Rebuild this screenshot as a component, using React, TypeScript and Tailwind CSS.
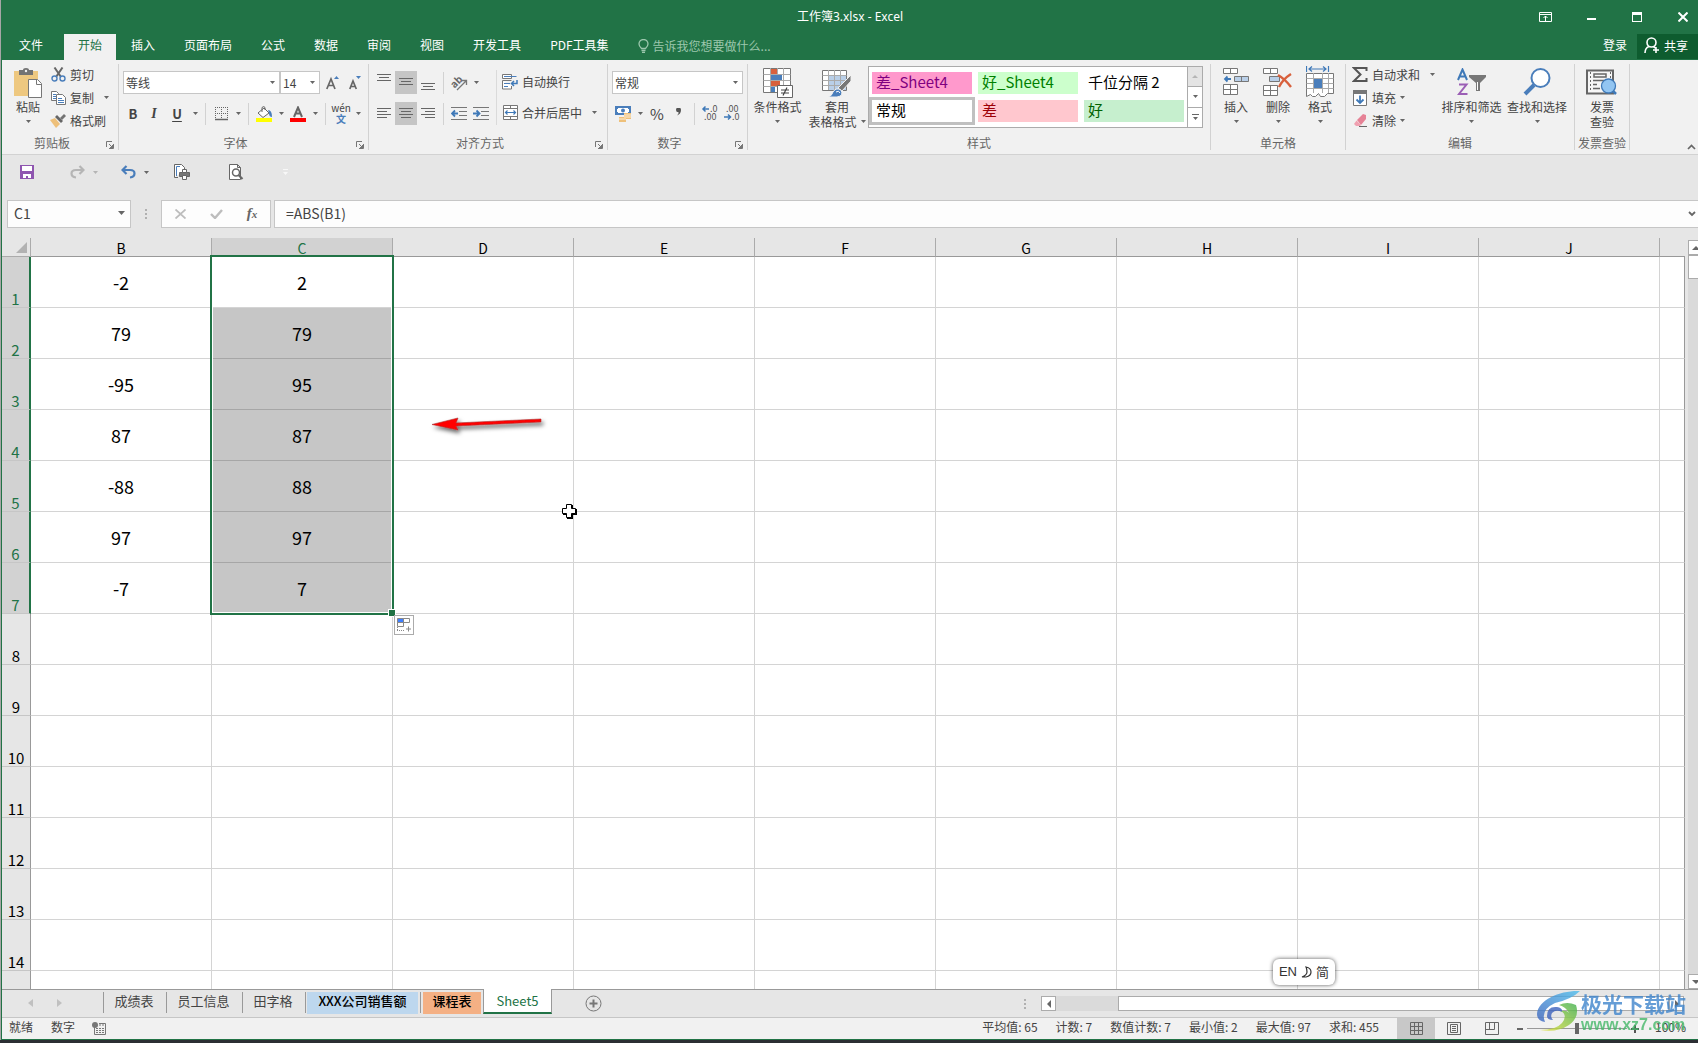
import type { ReactNode } from 'react';

const tabs = ['插入', '页面布局', '公式', '数据', '审阅', '视图', '开发工具', 'PDF工具集'];

const columns = ['B', 'C', 'D', 'E', 'F', 'G', 'H', 'I', 'J'];

const values = [
  ['-2', '2'],
  ['79', '79'],
  ['-95', '95'],
  ['87', '87'],
  ['-88', '88'],
  ['97', '97'],
  ['-7', '7'],
];

const rows = Array.from({ length: 15 }, (_, i) => i + 1);

const cellStyles = [
  { name: '差_Sheet4', look: 'bg-[#ff99cc] text-[#800080]' },
  { name: '好_Sheet4', look: 'bg-[#ccffcc] text-[#008000]' },
  { name: '千位分隔 2', look: 'bg-white text-black' },
  { name: '常规', look: 'bg-white text-black ring-3 ring-[#c0c0c0]' },
  { name: '差', look: 'bg-[#ffc7ce] text-[#9c0006]' },
  { name: '好', look: 'bg-[#c6efce] text-[#006100]' },
];

const stats = ['平均值: 65', '计数: 7', '数值计数: 7', '最小值: 2', '最大值: 97', '求和: 455'];

function Caret() {
  return (
    <svg width="5" height="3" viewBox="0 0 5 3">
      <path d="M0 0h5L2.500 3z" fill="#666" />
    </svg>
  );
}

function CaretButton({ label }: { label: string }) {
  return (
    <button aria-label={label} className="flex h-[23px] w-3 items-center justify-center">
      <Caret />
    </button>
  );
}

function Tool({ label, active, children }: { label: string; active?: boolean; children: ReactNode }) {
  return (
    <button
      aria-label={label}
      className={`flex h-[23px] w-[22px] shrink-0 items-center justify-center ${active ? 'bg-[#c5c5c5]' : ''}`}
    >
      {children}
    </button>
  );
}

function Sep() {
  return <span className="mx-1 h-[22px] w-px bg-[#d2d2d2]" />;
}

function Group({ label, width, launcher, children }: { label: string; width: string; launcher?: boolean; children: ReactNode }) {
  return (
    <section className={`flex shrink-0 flex-col border-r border-[#d2d2d2] ${width}`}>
      <div className="flex h-[72px]">{children}</div>
      <div className="flex h-[14px] items-center">
        <h2 className="flex-1 text-center leading-[14px] whitespace-nowrap text-[#666]">{label}</h2>
        {launcher && (
          <button aria-label={`${label}设置`} className="mt-1 mr-1 ml-1">
            <svg width="8" height="8" viewBox="0 0 8 8" fill="none" stroke="#777">
              <path d="M.5 6V.5H6M3 3l3.500 3.500M7.500 3v4.500H3" />
              <path d="M7 4v3H4z" fill="#777" />
            </svg>
          </button>
        )}
      </div>
    </section>
  );
}

function BigButton({ icon, lines, width, caret }: { icon: ReactNode; lines: string[]; width: string; caret?: 'below' | 'inline' }) {
  return (
    <button className={`flex shrink-0 flex-col items-center pt-1 leading-[15px] whitespace-nowrap ${width}`}>
      <span className="mb-px flex h-[30px] items-start">{icon}</span>
      {lines.map((l, i) => (
        <span key={l} className="flex items-center gap-1">
          {l}
          {caret === 'inline' && i === lines.length - 1 && <Caret />}
        </span>
      ))}
      {caret === 'below' && (
        <span className="flex h-[15px] items-center">
          <Caret />
        </span>
      )}
    </button>
  );
}

function SmallButton({ icon, label, caret }: { icon: ReactNode; label: string; caret?: 'near' | 'far' }) {
  return (
    <button className="flex h-[23px] items-center gap-1 pb-0.5 whitespace-nowrap">
      <span className="flex w-4 justify-center">{icon}</span>
      {label}
      {caret && (
        <span className={caret === 'far' ? 'ml-1.5' : ''}>
          <Caret />
        </span>
      )}
    </button>
  );
}

function Combo({ label, value, width }: { label: string; value: string; width: string }) {
  return (
    <div className={`relative h-[23px] ${width}`}>
      <select aria-label={label} className="h-full w-full appearance-none border border-[#c6c6c6] bg-white pl-0.5 text-[#444]">
        <option>{value}</option>
      </select>
      <span className="pointer-events-none absolute inset-y-0 right-[5px] flex items-center">
        <Caret />
      </span>
    </div>
  );
}

/* icons */

function Lines({ widths, top, align }: { widths: number[]; top: number; align: 'l' | 'c' | 'r' }) {
  return (
    <svg width="14" height="17" viewBox="0 0 14 17" fill="#666">
      {widths.map((w, i) => (
        <rect key={i} x={align === 'l' ? 0 : align === 'c' ? (14 - w) / 2 : 14 - w} y={top + i * 3} width={w} height="1" />
      ))}
    </svg>
  );
}

function PasteIcon() {
  return (
    <svg width="28" height="30" viewBox="0 0 28 30">
      <path d="M0 3h24v25H0z" fill="#eec880" />
      <path d="M5 2h4q0-2 3-2t3 2h4v5H5z" fill="#737373" />
      <circle cx="12" cy="3" r="1.200" fill="#f1f1f1" />
      <path d="M14.500 11.500h9l4 4v14h-13z" fill="#fff" stroke="#777" />
      <path d="M22.500 11.500v5h5" fill="none" stroke="#777" />
    </svg>
  );
}

function CutIcon() {
  return (
    <svg width="15" height="15" viewBox="0 0 15 15" fill="none">
      <path d="M3.500.500L10 10M11.500.500L5 10" stroke="#666" strokeWidth="2" />
      <circle cx="3.500" cy="11.500" r="2.500" stroke="#4a7ebb" strokeWidth="1.400" />
      <circle cx="11.500" cy="11.500" r="2.500" stroke="#4a7ebb" strokeWidth="1.400" />
    </svg>
  );
}

function CopyIcon() {
  return (
    <svg width="15" height="14" viewBox="0 0 15 14" fill="#fff" stroke="#777">
      <path d="M.5.500h5l2 2v7h-7z" />
      <path d="M2 3.500h3M2 5.500h3M2 7.500h3" stroke="#4a7ebb" />
      <path d="M5.500 3.500h6l3 3v7h-9z" />
      <path d="M7 7.500h4M7 9.500h6M7 11.500h6" stroke="#4a7ebb" />
    </svg>
  );
}

function BrushIcon() {
  return (
    <svg width="16" height="14" viewBox="0 0 16 14">
      <path d="M0 6l5-2 5 6-4 4z" fill="#eec07a" />
      <path d="M5 3l2-2 6 6-2 2z" fill="#666" />
      <path d="M10 4l4-4 2 2-4 4z" fill="#737373" />
    </svg>
  );
}

function FontSizeIcon({ up }: { up?: boolean }) {
  return (
    <svg width="14" height="15" viewBox="0 0 14 15">
      <path d={up ? 'M.8 14L5 4l4 10M2.300 10.500h5.500' : 'M1.800 14L5 6l3.300 8M3 11.500h4'} fill="none" stroke="#666" strokeWidth="1.700" />
      <path d={up ? 'M8 4h5l-2.500-3z' : 'M8 1h5l-2.500 3z'} fill="#4a7ebb" />
    </svg>
  );
}

function BorderIcon() {
  return (
    <svg width="13" height="14" viewBox="0 0 13 14" fill="none" stroke="#666">
      <path d="M0 .5h13M0 6.500h13M.5 0v12M6.500 0v12M12.500 0v12" strokeDasharray="1 1" />
      <path d="M0 12.500h13" strokeWidth="1.500" />
    </svg>
  );
}

function BucketIcon() {
  return (
    <svg width="16" height="16" viewBox="0 0 16 16">
      <path d="M2 7l6-5 5 5-6 4.500z" fill="#fff" stroke="#666" />
      <path d="M6 6V1.500q2-2 3 0V4" fill="none" stroke="#666" />
      <path d="M12 4q4 0 4 7-3 0-3-4z" fill="#4a7ebb" />
      <path d="M0 12h16v4H0z" fill="#ff0" />
    </svg>
  );
}

function FontColorIcon() {
  return (
    <svg width="16" height="16" viewBox="0 0 16 16">
      <path d="M4 11L8 1.500 12 11M5.500 7.500h5" fill="none" stroke="#666" strokeWidth="2" />
      <path d="M0 12h16v4H0z" fill="red" />
    </svg>
  );
}

function OrientationIcon() {
  return (
    <svg width="17" height="16" viewBox="0 0 17 16" className="overflow-visible">
      <text x="0" y="11" fontSize="10" fontWeight="700" fill="#666" transform="rotate(-45 5 8)">ab</text>
      <path d="M6 15l9-9M11 5.500h4.500V10" fill="none" stroke="#777" strokeWidth="1.300" />
    </svg>
  );
}

function IndentIcon({ right }: { right?: boolean }) {
  return (
    <svg width="16" height="14" viewBox="0 0 16 14" fill="none" stroke="#777">
      <path d="M0 .5h16M8 4.500h8M8 8.500h8M0 12.500h16" />
      <path d={right ? 'M0 6.500h6M3.500 3.500l3 3-3 3' : 'M1 6.500h6M4 3.500l-3 3 3 3'} stroke="#3f79b8" strokeWidth="1.800" />
    </svg>
  );
}

function WrapIcon() {
  return (
    <svg width="16" height="16" viewBox="0 0 16 16" fill="none" stroke="#777">
      <path d="M.5.500h9v4h-9zM.5 8V6.500h9M.5 7v8h9v-3" fill="#fff" />
      <path d="M2 2.500h12.500M2 9.500h6M2 12.500h4" stroke="#4a7ebb" />
      <path d="M15 6v3.500h-5M12 7l-2.500 2.500L12 12" stroke="#3f79b8" strokeWidth="1.500" />
    </svg>
  );
}

function MergeIcon() {
  return (
    <svg width="15" height="15" viewBox="0 0 15 15" fill="none" stroke="#777">
      <path d="M.5.500h14v14H.5z" fill="#fff" />
      <path d="M.5 3.500h14M.5 11.500h14M7.500 0v3.500M7.500 11.500V15" />
      <path d="M2.500 7.500h10M4.500 5.500l-2 2 2 2M10.500 5.500l2 2-2 2" stroke="#3f79b8" strokeWidth="1.200" />
    </svg>
  );
}

function MoneyIcon() {
  return (
    <svg width="17" height="16" viewBox="0 0 17 16">
      <path d="M0 0h16v9H0z" fill="#4a7ebb" />
      <path d="M3 2h10v1h1v3h-1v1H3V6H2V3h1z" fill="#fff" />
      <circle cx="8" cy="4.500" r="2" fill="#4a7ebb" />
      <path d="M9 7h7v6H9zM4 11h7v5H4z" fill="#eec07a" />
      <path d="M9 9h7M9 11h7M4 13h7" stroke="#fff" strokeWidth=".7" />
    </svg>
  );
}

function DecimalIcon({ less }: { less?: boolean }) {
  return (
    <svg width="16" height="15" viewBox="0 0 16 15" fontSize="9" fill="#555" className="overflow-visible">
      <text x={less ? 2 : 8} y="6">{less ? '.00' : '.0'}</text>
      <text x={less ? 8 : 2} y="14">{less ? '.0' : '.00'}</text>
      <path
        d={less ? 'M0 11h6M4 8.500L6.500 11 4 13.500' : 'M1 3h6M3.500.500L1 3l2.500 2.500'}
        fill="none"
        stroke="#3f79b8"
        strokeWidth="1.500"
      />
    </svg>
  );
}

function CondFormatIcon() {
  return (
    <svg width="30" height="30" viewBox="0 0 30 30">
      <path d="M.5.500h27v24H.5z" fill="#fff" stroke="#777" />
      <path d="M.5 6.500h27M.5 12.500h27M.5 18.500h27M7.500 0v24M14.500 0v24M20.500 0v24" stroke="#aaa" fill="none" />
      <path d="M8 1h6v5H8zM8 13h9v5H8z" fill="#d8603c" />
      <path d="M8 7h11v5H8zM8 19h4v5H8z" fill="#4a7ebb" />
      <path d="M14.500 17.500h15v12h-15z" fill="#fff" stroke="#666" />
      <path d="M18 22h8M18 25h8M24 19.500l-4 8" stroke="#444" strokeWidth="1.200" />
    </svg>
  );
}

function TableFormatIcon() {
  return (
    <svg width="30" height="30" viewBox="0 0 30 30">
      <path d="M.5 2.500h24v20H.5z" fill="#fff" stroke="#777" />
      <path d="M7 8h17v14H7z" fill="#b9cfe8" />
      <path d="M.5 7.500h24M.5 12.500h24M.5 17.500h24M6.500 2v20M12.500 2v20M18.500 2v20" stroke="#aaa" fill="none" />
      <path d="M29 7v6l-9 10-4-3z" fill="#777" stroke="#f1f1f1" />
      <path d="M6 29q4-1 5-5 3-5 8-2 3 6-4 7z" fill="#4a7ebb" stroke="#f1f1f1" />
      <path d="M14 24q3-2 4 1" stroke="#fff" fill="none" />
    </svg>
  );
}

function InsertCellsIcon() {
  return (
    <svg width="27" height="28" viewBox="0 0 27 28" fill="#fff" stroke="#777">
      <path d="M.5.500h14v5H.5zM7.500.500v5M.5 16.500h14v10H.5zM.5 21.500h14M7.500 16.500v10" />
      <path d="M11.500 8.500h14v5h-14zM18.500 8.500v5" fill="#b9cfe8" />
      <path d="M2 11h6M4.500 8.500L2 11l2.500 2.500" fill="none" stroke="#3f79b8" strokeWidth="1.800" />
    </svg>
  );
}

function DeleteCellsIcon() {
  return (
    <svg width="30" height="28" viewBox="0 0 30 28" fill="#fff" stroke="#777">
      <path d="M.5.500h14v5H.5zM7.500.500v5M.5 17.500h14v10H.5zM.5 22.500h14M7.500 17.500v10" />
      <path d="M6.500 8.500h10v5h-10z" fill="#b9cfe8" />
      <path d="M15 7q7 4 13 12M28 6q-8 5-12 13" fill="none" stroke="#d8603c" strokeWidth="2.400" />
    </svg>
  );
}

function FormatCellsIcon() {
  return (
    <svg width="28" height="32" viewBox="0 0 28 32" className="-mt-0.5" fill="#fff" stroke="#777">
      <path d="M.5 7.500h27v20h-6l-3 3h-4l-2-3-3 3h-3l-2-2-4 2z" />
      <path d="M.5 12.500h27M.5 22.500h27M7.500 7v20M16.500 7v20M22.500 7v20M.5 17.500h27" stroke="#aaa" />
      <path d="M8 13h8v9H8z" fill="#4a7ebb" stroke="none" />
      <path d="M.5 0v6M22.500 0v6M3 3h17M6 .5L3 3l3 2.500M17 .5L20 3l-3 2.500" fill="none" stroke="#3f79b8" strokeWidth="1.200" />
    </svg>
  );
}

function SigmaIcon() {
  return (
    <svg width="16" height="15" viewBox="0 0 16 15">
      <path d="M14.500 4V1H2l6.500 6.500L2 14h12.500v-3" fill="none" stroke="#555" strokeWidth="2" />
    </svg>
  );
}

function FillIcon() {
  return (
    <svg width="14" height="16" viewBox="0 0 14 16">
      <path d="M.5.500h13v15H.5z" fill="#fff" stroke="#777" />
      <path d="M0 0h14v4H0z" fill="#777" />
      <path d="M7 5.500V13M3.500 9.500L7 13l3.500-3.500" fill="none" stroke="#3f79b8" strokeWidth="1.800" />
    </svg>
  );
}

function EraserIcon() {
  return (
    <svg width="15" height="13" viewBox="0 0 15 13">
      <path d="M4 6l6-6 3 1v4l-5 6z" fill="#e68296" />
      <path d="M3.500 6.500L8 11l-1 1H3L1 10z" fill="#f0a0b0" />
      <path d="M6 12.500h8" stroke="#666" />
    </svg>
  );
}

function SortIcon() {
  return (
    <svg width="30" height="29" viewBox="0 0 30 29" fill="none">
      <path d="M1 12L5.500 1.500 10 12M2.500 8.500h6" stroke="#3f79b8" strokeWidth="2" />
      <path d="M2 16.500h7.500L2 26h8.500" stroke="#9b5fb5" strokeWidth="2" />
      <path d="M12 7h17v2l-6 6v8h-4v-8l-7-6z" fill="#777" />
      <path d="M20.500 14v8" stroke="#fff" />
    </svg>
  );
}

function FindIcon() {
  return (
    <svg width="28" height="28" viewBox="0 0 28 28">
      <path d="M2 26l9-9" stroke="#4a7ebb" strokeWidth="4" />
      <circle cx="17.500" cy="10" r="9" fill="#fff" stroke="#4a7ebb" strokeWidth="2" />
    </svg>
  );
}

function InvoiceIcon() {
  return (
    <svg width="32" height="28" viewBox="0 0 32 28" fill="none" stroke="#666">
      <path d="M1 2.500h26v23H1z" strokeWidth="2" fill="#f6f6f6" />
      <path d="M4.500 4v20M24.500 4v20" strokeDasharray="2 2" />
      <path d="M8 6h12v3H8zM7 12.500h11M7 16.500h4M7 20.500h7" strokeWidth="1.500" />
      <path d="M26 22l4 4" stroke="#3f79b8" strokeWidth="2.500" />
      <circle cx="22.500" cy="18" r="7" fill="#92c5f2" stroke="#3f79b8" strokeWidth="1.300" />
    </svg>
  );
}

function TitleBar() {
  return (
    <header className="bg-[#217346] text-white">
      <div className="relative flex h-[34px] items-center justify-end">
        <h1 className="absolute inset-x-0 text-center font-['Noto_Sans','Noto_Sans_CJK_SC',sans-serif]">工作簿3.xlsx - Excel</h1>
        <div className="relative flex items-center">
          <button aria-label="功能区显示选项" className="flex w-[46px] justify-center">
            <svg width="13" height="10" viewBox="0 0 13 10" fill="none" stroke="#fff">
              <path d="M.5.500h12v9H.5zM0 2.500h13M6.500 9V4M4.500 6l2-2 2 2" />
            </svg>
          </button>
          <button aria-label="最小化" className="flex w-[46px] justify-center pt-1">
            <span className="h-0.5 w-[9px] bg-white" />
          </button>
          <button aria-label="最大化" className="flex w-[46px] justify-center">
            <span className="h-[10px] w-[10px] border border-t-3 border-white" />
          </button>
          <button aria-label="关闭" className="flex w-[38px] justify-center pl-2">
            <svg width="10" height="10" viewBox="0 0 10 10" stroke="#fff" strokeWidth="2">
              <path d="M.5.500l9 9M9.500.500l-9 9" />
            </svg>
          </button>
        </div>
      </div>
      <nav className="flex h-[26px] gap-px whitespace-nowrap">
        <button className="mr-[3px] w-[58px] pb-1">文件</button>
        <button className="bg-[#f1f1f1] px-[14px] pb-1 text-[#217346]">开始</button>
        {tabs.map((t) => (
          <button key={t} className="px-[14px] pb-1">{t}</button>
        ))}
        <label className="ml-[14px] flex flex-1 items-center gap-1 pb-0.5">
          <svg width="11" height="14" viewBox="0 0 11 14" fill="none" stroke="#9cc7ad" strokeWidth="1.300">
            <path d="M3.500 9.500Q1 7 1 5a4.500 4.500 0 019 0q0 2-2.500 4.500zM3.500 11.500h4M4 13.300h3" />
          </svg>
          <input aria-label="操作说明搜索" placeholder="告诉我您想要做什么..." className="w-40 bg-transparent outline-none placeholder:text-[#9cc7ad]" />
        </label>
        <button className="px-[9px] pb-1">登录</button>
        <button className="flex h-[25px] items-center gap-1 bg-[#0e5c2f] pr-[10px] pb-0.5 pl-[7px]">
          <svg width="16" height="17" viewBox="0 0 16 17" fill="none" stroke="#fff" strokeWidth="1.600">
            <circle cx="7.500" cy="5.500" r="4.500" />
            <path d="M1 16q0-5 4-6.500M9.500 9.500l2 1.500M12 10v6M9 13h6" />
          </svg>
          共享
        </button>
      </nav>
    </header>
  );
}

function Ribbon() {
  return (
    <div className="flex border-b border-[#d2d2d2] bg-[#f1f1f1] py-1 text-[#444]">
      <Group label="剪贴板" width="w-[117px]" launcher>
        <div className="ml-3">
          <BigButton icon={<PasteIcon />} lines={['粘贴']} width="w-[28px]" caret="below" />
        </div>
        <div className="ml-2">
          <SmallButton icon={<CutIcon />} label="剪切" />
          <SmallButton icon={<CopyIcon />} label="复制" caret="far" />
          <SmallButton icon={<BrushIcon />} label="格式刷" />
        </div>
      </Group>

      <Group label="字体" width="w-[250px]" launcher>
        <div className="flex flex-col gap-2 pt-[7px] pl-1">
          <div className="flex">
            <Combo label="字体" value="等线" width="w-[157px]" />
            <Combo label="字号" value="14" width="w-[40px]" />
            <span className="w-0.5" />
            <Tool label="增大字号"><FontSizeIcon up /></Tool>
            <Tool label="减小字号"><FontSizeIcon /></Tool>
          </div>
          <div className="flex items-center">
            <button className="w-5 text-[13px] leading-5 font-bold">B</button>
            <button className="w-[22px] font-['Liberation_Serif',serif] text-[14px] leading-5 font-bold italic">I</button>
            <button className="w-6 text-[13px] leading-5 font-bold underline underline-offset-2">U</button>
            <CaretButton label="下划线选项" />
            <Sep />
            <Tool label="边框"><BorderIcon /></Tool>
            <CaretButton label="边框选项" />
            <Sep />
            <Tool label="填充颜色"><BucketIcon /></Tool>
            <CaretButton label="填充颜色选项" />
            <Tool label="字体颜色"><FontColorIcon /></Tool>
            <CaretButton label="字体颜色选项" />
            <Sep />
            <button className="flex h-[23px] w-[22px] flex-col items-center text-[10px] leading-[11px]">
              <span>wén</span>
              <span className="font-bold text-[#4a7ebb]">文</span>
            </button>
            <CaretButton label="拼音选项" />
          </div>
        </div>
      </Group>

      <Group label="对齐方式" width="w-[239px]" launcher>
        <div className="flex flex-col gap-2 pt-[7px] pl-1">
          <div className="flex items-center">
            <Tool label="顶端对齐"><Lines widths={[14, 10, 14]} top={0} align="c" /></Tool>
            <Tool label="垂直居中" active><Lines widths={[14, 10, 14]} top={4} align="c" /></Tool>
            <Tool label="底端对齐"><Lines widths={[14, 10, 14]} top={9} align="c" /></Tool>
            <Sep />
            <Tool label="方向"><OrientationIcon /></Tool>
            <CaretButton label="方向选项" />
          </div>
          <div className="flex items-center">
            <Tool label="左对齐"><Lines widths={[14, 10, 14, 10]} top={3} align="l" /></Tool>
            <Tool label="居中" active><Lines widths={[14, 10, 14, 10]} top={3} align="c" /></Tool>
            <Tool label="右对齐"><Lines widths={[14, 10, 14, 10]} top={3} align="r" /></Tool>
            <Sep />
            <Tool label="减少缩进量"><IndentIcon /></Tool>
            <Tool label="增加缩进量"><IndentIcon right /></Tool>
          </div>
        </div>
        <span className="mx-1 mt-1.5 h-[55px] w-px bg-[#dadada]" />
        <div className="flex flex-col gap-2 pt-[7px] pl-px">
          <SmallButton icon={<WrapIcon />} label="自动换行" />
          <SmallButton icon={<MergeIcon />} label="合并后居中" caret="far" />
        </div>
      </Group>

      <Group label="数字" width="w-[140px]" launcher>
        <div className="flex flex-col gap-2 pt-[7px] pl-1">
          <Combo label="数字格式" value="常规" width="w-[131px]" />
          <div className="flex items-center">
            <Tool label="会计数字格式"><MoneyIcon /></Tool>
            <CaretButton label="会计数字格式选项" />
            <button className="w-[22px] text-[15px] leading-[23px]">%</button>
            <Tool label="千位分隔样式">
              <svg width="6" height="8" viewBox="0 0 6 8" className="mb-1">
                <path d="M0 2a2.400 2.400 0 015 0q0 4-4 5.500Q3 5.500 2.500 4.300 0 4.300 0 2z" fill="#555" />
              </svg>
            </Tool>
            <Sep />
            <Tool label="增加小数位数"><DecimalIcon /></Tool>
            <Tool label="减少小数位数"><DecimalIcon less /></Tool>
          </div>
        </div>
      </Group>

      <Group label="样式" width="w-[463px]">
        <BigButton icon={<CondFormatIcon />} lines={['条件格式']} width="w-[59px]" caret="below" />
        <BigButton icon={<TableFormatIcon />} lines={['套用', '表格格式']} width="w-[60px]" caret="inline" />
        <div className="mt-0.5 ml-px flex h-[62px] w-[335px] border border-[#ababab] bg-white">
          <div className="grid flex-1 grid-cols-3 content-start gap-1.5 px-[3px] pt-[5px]">
            {cellStyles.map((s) => (
              <button key={s.name} className={`h-[22px] pb-0.5 pl-1 text-left text-[15px] leading-5 ${s.look}`}>
                {s.name}
              </button>
            ))}
          </div>
          <div className="flex w-[15px] flex-col divide-y divide-[#ababab] border-l border-[#ababab]">
            <button aria-label="上一行" className="flex flex-1 items-center justify-center bg-[#e4e4e4]">
              <svg width="6" height="3" viewBox="0 0 6 3"><path d="M0 3h6L3 0z" fill="#b5b5b5" /></svg>
            </button>
            <button aria-label="下一行" className="flex flex-1 items-center justify-center">
              <Caret />
            </button>
            <button aria-label="其他" className="flex flex-1 items-center justify-center">
              <svg width="7" height="7" viewBox="0 0 7 7"><path d="M0 0h7v1H0zM1 3h5L3.500 6z" fill="#666" /></svg>
            </button>
          </div>
        </div>
      </Group>

      <Group label="单元格" width="w-[135px]">
        <span className="w-1" />
        <BigButton icon={<InsertCellsIcon />} lines={['插入']} width="w-[42px]" caret="below" />
        <BigButton icon={<DeleteCellsIcon />} lines={['删除']} width="w-[42px]" caret="below" />
        <BigButton icon={<FormatCellsIcon />} lines={['格式']} width="w-[42px]" caret="below" />
      </Group>

      <Group label="编辑" width="w-[229px]">
        <div className="w-[92px] pl-1.5">
          <SmallButton icon={<SigmaIcon />} label="自动求和" caret="far" />
          <SmallButton icon={<FillIcon />} label="填充" caret="near" />
          <SmallButton icon={<EraserIcon />} label="清除" caret="near" />
        </div>
        <BigButton icon={<SortIcon />} lines={['排序和筛选']} width="w-[67px]" caret="below" />
        <BigButton icon={<FindIcon />} lines={['查找和选择']} width="w-[64px]" caret="below" />
      </Group>

      <Group label="发票查验" width="w-[55px]">
        <BigButton icon={<InvoiceIcon />} lines={['发票', '查验']} width="w-[54px]" />
      </Group>

      <div className="flex flex-1 items-end justify-end pr-0.5">
        <button aria-label="折叠功能区">
          <svg width="9" height="6" viewBox="0 0 9 6" fill="none" stroke="#666" strokeWidth="1.700">
            <path d="M1 5l3.500-3.500L8 5" />
          </svg>
        </button>
      </div>
    </div>
  );
}

function QuickAccess() {
  return (
    <div className="flex h-[34px] items-center pl-[18px]">
      <button aria-label="保存">
        <svg width="14" height="14" viewBox="0 0 14 14">
          <path d="M0 0h14v14H0z" fill="#8f56b0" />
          <path d="M2 1h10v5H2zM3 9h8v4H8v-2H6v2H3z" fill="#fff" />
        </svg>
      </button>
      <button aria-label="恢复" className="ml-9 flex items-center gap-2">
        <svg width="15" height="14" viewBox="0 0 15 14" fill="none" stroke="#b5b5b5" strokeWidth="2.200">
          <path d="M13 5H6Q1.500 5 1.500 8.500T6 12.500M9.500 1L13.500 5l-4 4" />
        </svg>
        <svg width="5" height="3" viewBox="0 0 5 3"><path d="M0 0h5L2.500 3z" fill="#b5b5b5" /></svg>
      </button>
      <button aria-label="撤消" className="ml-[23px] flex items-center gap-2">
        <svg width="15" height="14" viewBox="0 0 15 14" fill="none" stroke="#4a7ebb" strokeWidth="2.200">
          <path d="M2 5h7q4.500 0 4.500 3.500T9 12.500M5.500 1L1.500 5l4 4" />
        </svg>
        <Caret />
      </button>
      <button aria-label="快速打印" className="ml-[25px]">
        <svg width="16" height="16" viewBox="0 0 16 16" fill="#fff" stroke="#666">
          <path d="M.5 13.500V.5h7l3 3V6M.5 13.500H4" />
          <path d="M2.500 12V2.500H6" stroke="#4a7ebb" fill="none" />
          <path d="M5.500 8.500h10v4h-10z" fill="#777" />
          <path d="M8.500 5.500h4v3h-4zM8.500 11.500h4v4h-4z" />
        </svg>
      </button>
      <button aria-label="打印预览和打印" className="ml-[39px]">
        <svg width="15" height="16" viewBox="0 0 15 16" fill="none" stroke="#666">
          <path d="M.5.500h8l3 3v12H.5zM8.500.500v3h3" fill="#fff" />
          <circle cx="7" cy="8.500" r="3.500" strokeWidth="1.500" fill="#fff" />
          <path d="M9.500 11l4 4" strokeWidth="2.200" />
        </svg>
      </button>
      <button aria-label="自定义快速访问工具栏" className="ml-[39px]">
        <svg width="5" height="6" viewBox="0 0 5 6"><path d="M0 0h5v1H0zM0 3h5L2.500 6z" fill="#f8f8f8" /></svg>
      </button>
    </div>
  );
}

function FormulaBar() {
  return (
    <div className="mt-[11px] mb-[10px] flex h-7 pl-[5px] text-[#444]">
      <div className="relative w-[124px]">
        <input aria-label="名称框" defaultValue="C1" className="h-full w-full border border-[#c6c6c6] bg-[#fdfdfd] pb-0.5 pl-1.5 text-[14px]" />
        <svg width="7" height="4" viewBox="0 0 7 4" className="pointer-events-none absolute top-[11px] right-1.5">
          <path d="M0 0h7L3.500 4z" fill="#666" />
        </svg>
      </div>
      <span className="flex w-[30px] items-center justify-center">
        <svg width="2" height="10" viewBox="0 0 2 10" fill="#b0b0b0"><path d="M0 0h2v2H0zM0 4h2v2H0zM0 8h2v2H0z" /></svg>
      </span>
      <div className="mr-[3px] flex w-[110px] border border-[#c6c6c6] bg-[#fdfdfd]">
        <button aria-label="取消" className="flex flex-1 items-center justify-center">
          <svg width="11" height="10" viewBox="0 0 11 10" stroke="#bdbdbd" strokeWidth="1.800"><path d="M.5.500l10 9M10.500.500l-10 9" /></svg>
        </button>
        <button aria-label="输入" className="flex flex-1 items-center justify-center">
          <svg width="13" height="10" viewBox="0 0 13 10" fill="none" stroke="#bdbdbd" strokeWidth="2.400"><path d="M1 5l4 4 7-8" /></svg>
        </button>
        <button className="flex-1 pb-0.5 font-['Liberation_Serif',serif] text-[15px] leading-5 font-bold text-[#666] italic">
          f<span className="text-[11px]">x</span>
        </button>
      </div>
      <input aria-label="编辑栏" defaultValue="=ABS(B1)" className="min-w-0 flex-1 border border-r-0 border-[#c6c6c6] bg-[#fdfdfd] pb-0.5 pl-[11px] text-[14px]" />
      <button aria-label="展开编辑栏" className="flex w-[10px] items-center border-y border-[#c6c6c6] bg-[#fdfdfd]">
        <svg width="8" height="6" viewBox="0 0 8 6" fill="none" stroke="#666" strokeWidth="1.800"><path d="M1 1l3 3 3-3" /></svg>
      </button>
    </div>
  );
}

function Sheet() {
  return (
    <div className="flex min-h-0 flex-1 overflow-hidden">
      <div className="relative min-w-0 flex-1">
        <table className="w-full table-fixed border-separate border-spacing-0 text-black">
          <colgroup>
            <col className="w-[29px]" />
            {columns.map((c) => (
              <col key={c} className="w-[181px]" />
            ))}
            <col />
          </colgroup>
          <thead>
            <tr className="text-[14px] leading-4">
              <th className="h-[19px] border-r border-b border-[#ababab] p-0">
                <svg width="11" height="11" viewBox="0 0 11 11" className="ml-auto mr-[3px]"><path d="M11 0v11H0z" fill="#b2b2b2" /></svg>
              </th>
              {columns.map((c) => (
                <th
                  key={c}
                  className={`border-r border-b border-r-[#ababab] border-b-[#999] p-0 pt-0.5 font-normal ${c === 'C' ? 'bg-[#d2d2d2] text-[#217346]' : ''}`}
                >
                  {c}
                </th>
              ))}
              <th className="border-b border-[#999] p-0" />
            </tr>
          </thead>
          <tbody>
            {rows.map((r) => (
              <tr key={r} className="h-[51px] text-[18px] leading-6">
                <th
                  className={`border-b border-b-[#c6c6c6] p-0 align-bottom text-[15px] leading-4 font-normal ${
                    r <= values.length ? 'border-r-2 border-r-[#217346] bg-[#d2d2d2] text-[#217346]' : 'border-r border-r-[#999]'
                  }`}
                >
                  {r < rows.length && r}
                </th>
                {columns.map((c, i) => {
                  const selected = c === 'C' && r > 1 && r <= values.length;
                  return (
                    <td
                      key={c}
                      className={`border-r border-b border-r-[#d4d4d4] p-0 text-center ${
                        selected ? 'border-b-[#a6a6a6] bg-[#c6c6c6]' : 'border-b-[#d4d4d4] bg-white'
                      }`}
                    >
                      {values[r - 1]?.[i]}
                    </td>
                  );
                })}
                <td className="border-r border-b border-r-[#999] border-b-[#d4d4d4] bg-white p-0" />
              </tr>
            ))}
          </tbody>
        </table>

        {/* selection frame over C1:C7 */}
        <div className="pointer-events-none absolute top-[17px] left-[208px] h-[360px] w-[184px] border-2 border-[#217346] inset-ring inset-ring-white">
          <span className="absolute -right-[3px] -bottom-[3px] h-1.5 w-1.5 bg-[#217346] outline outline-white" />
        </div>
        <button aria-label="自动填充选项" className="absolute top-[377px] left-[392px] flex h-5 w-5 items-center justify-center border border-[#ababab] bg-white">
          <svg width="14" height="14" viewBox="0 0 14 14" fill="none" stroke="#888">
            <path d="M.5.500h6v4h-6z" fill="#3f7fff" />
            <path d="M6.500.500h6v4h-6zM.5 4.500h6v4h-6z" />
            <path d="M0 12.500h7M.5 9v3" strokeDasharray="1 1" />
            <path d="M9 11h5M11.500 8.500v5" />
          </svg>
        </button>
        <svg width="124" height="28" viewBox="0 0 124 28" className="pointer-events-none absolute top-[172px] left-[426px]">
          <defs>
            <filter id="shade" x="-20%" y="-50%" width="140%" height="220%">
              <feDropShadow dx="2" dy="3" stdDeviation="2" floodColor="#000" floodOpacity="0.6" />
            </filter>
          </defs>
          <path d="M4 14.500L30 8l-2 5 85-4v3l-85 4 2 4z" fill="#f00" stroke="#a33" strokeWidth=".6" filter="url(#shade)" />
        </svg>
        <svg width="16" height="16" viewBox="0 0 16 16" className="pointer-events-none absolute top-[266px] left-[560px]">
          <path d="M5 1h6v4h4v6h-4v4H5v-4H1V5h4z" fill="#000" />
          <path d="M4.500.500h5v4h4v5h-4v4h-5v-4h-4v-5h4z" fill="#fff" stroke="#000" />
        </svg>
      </div>

      <div className="mt-0.5 ml-[3px] flex w-[10px] shrink-0 flex-col overflow-hidden bg-[#dadada]">
        <button aria-label="向上滚动" className="flex h-[15px] w-4 items-center border border-[#ababab] bg-white pl-[3px]">
          <svg width="8" height="4" viewBox="0 0 8 4"><path d="M0 4h8L4 0z" fill="#666" /></svg>
        </button>
        <div className="h-6 w-4 border border-[#ababab] bg-white" />
        <button aria-label="向下滚动" className="mt-auto flex h-[15px] w-4 items-center border border-[#ababab] bg-white pl-[3px]">
          <svg width="8" height="4" viewBox="0 0 8 4"><path d="M0 0h8L4 4z" fill="#666" /></svg>
        </button>
      </div>
    </div>
  );
}

function SheetTabs() {
  return (
    <div className="relative flex h-7 border-t border-[#999] bg-[#e6e6e6] text-[13px] leading-4 whitespace-nowrap text-[#444]">
      <div className="flex w-[101px] items-center gap-6 pb-0.5 pl-[26px]">
        <svg width="5" height="8" viewBox="0 0 5 8"><path d="M5 0v8L0 4z" fill="#c0c0c0" /></svg>
        <svg width="5" height="8" viewBox="0 0 5 8"><path d="M0 0v8l5-4z" fill="#c0c0c0" /></svg>
      </div>
      <div className="flex items-start pt-0.5">
        <button className="h-[21px] w-[63px] border-l border-[#999] pr-0.5 pb-1">成绩表</button>
        <button className="h-[21px] w-[76px] border-l border-[#999] pr-0.5 pb-1">员工信息</button>
        <button className="h-[21px] w-[63px] border-l border-[#999] pr-0.5 pb-1">田字格</button>
        <span className="mr-px h-[21px] w-px bg-[#999]" />
        <button className="mr-0.5 h-[22px] w-[111px] bg-[#bdd7ee] pb-1 font-medium text-black">XXX公司销售额</button>
        <span className="mr-0.5 h-[21px] w-px bg-[#999]" />
        <button className="h-[22px] w-[58px] bg-[#f4b084] pb-1 font-medium text-black">课程表</button>
      </div>
      <button className="-mt-px ml-0.5 h-[25px] w-[69px] border-r border-b-2 border-l border-r-[#999] border-b-[#217346] border-l-[#999] bg-white text-[#217346]">Sheet5</button>
      <button aria-label="新工作表" className="ml-[33px]">
        <svg width="17" height="17" viewBox="0 0 17 17" fill="none" stroke="#777">
          <circle cx="8.500" cy="8.500" r="7.500" />
          <path d="M8.500 4.500v8M4.500 8.500h8" strokeWidth="2" />
        </svg>
      </button>
      <div className="ml-auto flex w-[674px] items-center">
        <svg width="2" height="10" viewBox="0 0 2 10" fill="#b0b0b0" className="mr-[15px]"><path d="M0 0h2v2H0zM0 4h2v2H0zM0 8h2v2H0z" /></svg>
        <button aria-label="向左滚动" className="flex h-[15px] w-[15px] items-center justify-center border border-[#ababab] bg-white">
          <svg width="4" height="8" viewBox="0 0 4 8"><path d="M4 0v8L0 4z" fill="#666" /></svg>
        </button>
        <span className="h-[15px] w-[62px] bg-[#dadada]" />
        <span className="h-[15px] flex-1 border border-[#ababab] bg-white" />
        <button aria-label="向右滚动" className="mr-[14px] flex h-[15px] w-[15px] items-center justify-center border border-[#ababab] bg-white">
          <svg width="4" height="8" viewBox="0 0 4 8"><path d="M0 0v8l4-4z" fill="#666" /></svg>
        </button>
      </div>
    </div>
  );
}

function StatusBar() {
  return (
    <footer className="flex h-[22px] items-center border-t border-[#c6c6c6] bg-[#f1f1f1] pl-[7px] leading-4 whitespace-nowrap text-[#444]">
      <span className="mr-[18px] pb-1">就绪</span>
      <span className="mr-[17px] pb-1">数字</span>
      <button aria-label="录制宏">
        <svg width="14" height="13" viewBox="0 0 14 13" fill="none" stroke="#777">
          <path d="M2.500 5v7.500h11v-11H7" />
          <circle cx="3" cy="3" r="3" fill="#777" stroke="none" />
          <path d="M7 3h6M4 6.500h8M4 8.500h8M4 10.500h8" strokeDasharray="2 1" />
        </svg>
      </button>
      <div className="mr-[18px] ml-auto flex gap-[18px] pb-1">
        {stats.map((s) => (
          <span key={s}>{s}</span>
        ))}
      </div>
      <button aria-label="普通" className="flex h-[21px] w-[38px] items-center justify-center bg-[#c8c8c8]">
        <svg width="13" height="13" viewBox="0 0 13 13" fill="none" stroke="#666"><path d="M.5.500h12v12H.5zM.5 4.500h12M.5 8.500h12M4.500 0v13M8.500 0v13" /></svg>
      </button>
      <button aria-label="页面布局" className="flex w-[38px] justify-center">
        <svg width="14" height="13" viewBox="0 0 14 13" fill="none" stroke="#666"><path d="M.5.500h13v12H.5zM3.500 2.500h7v8h-7zM5 4.500h4M5 6.500h4M5 8.500h4" /></svg>
      </button>
      <button aria-label="分页预览" className="flex w-[38px] justify-center">
        <svg width="14" height="13" viewBox="0 0 14 13" fill="none" stroke="#666"><path d="M.5.500h13v12H.5zM4.500 0v7.500M0 7.500h9.500M9.500 0v7.500" /></svg>
      </button>
      <button aria-label="缩小" className="mr-1 ml-1.5 h-0.5 w-1.5 bg-[#666]" />
      <input
        type="range"
        aria-label="显示比例"
        className="h-3 w-[100px] appearance-none bg-[linear-gradient(#999,#999)] bg-[length:100%_1px] bg-center bg-no-repeat [&::-webkit-slider-thumb]:h-[11px] [&::-webkit-slider-thumb]:w-1 [&::-webkit-slider-thumb]:appearance-none [&::-webkit-slider-thumb]:bg-[#666]"
      />
      <button aria-label="放大" className="ml-1">
        <svg width="8" height="8" viewBox="0 0 8 8" stroke="#555" strokeWidth="2"><path d="M4 0v8M0 4h8" /></svg>
      </button>
      <span className="mr-[13px] ml-4 w-[30px] pb-1">100%</span>
    </footer>
  );
}

function Watermark() {
  return (
    <div className="pointer-events-none absolute right-3 bottom-[7px] flex whitespace-nowrap opacity-80">
      <svg width="46" height="46" viewBox="0 0 46 46">
        <defs>
          <linearGradient id="sky" x1="0" y1="1" x2="1" y2="0">
            <stop offset="0" stopColor="#3b62bd" />
            <stop offset="1" stopColor="#4fc0ee" />
          </linearGradient>
          <linearGradient id="leaf" x1="0" y1="1" x2="1" y2="0">
            <stop offset="0" stopColor="#e6e23c" />
            <stop offset="1" stopColor="#3fb04f" />
          </linearGradient>
        </defs>
        <path d="M45 1C27 0 3 9 2 24q0 7 8 8-5-12 10-19Q37 9 45 1z" fill="url(#sky)" />
        <path d="M12 26q0-10 10-9 6 1 5 5-6-3-10 1-2 4 1 7-6 0-6-4z" fill="#3b62bd" />
        <path d="M24 15q8-4 17 0 4 12-7 20-12 8-29 5 16 0 22-7 6-8-1-12 6-1 8 2-3-6-10-8z" fill="url(#leaf)" />
      </svg>
      <div>
        <div className="text-[21px] leading-[26px] font-bold text-[#3f85cc]">极光下载站</div>
        <div className="font-['Liberation_Sans',sans-serif] text-[16px] leading-[18px] font-bold text-[#46b86a]">www.xz7.com</div>
      </div>
    </div>
  );
}

export default function App() {
  return (
    <div className="relative flex h-screen flex-col overflow-hidden bg-[#2b2e33] pb-[3px] font-['Noto_Sans_CJK_SC','Noto_Sans',sans-serif] text-[12px]">
      <main className="flex min-h-0 flex-1 flex-col border-l border-[#a6a6a6]">
        <div className="flex min-h-0 flex-1 flex-col border-b border-l border-[#217346] bg-[#e6e6e6]">
          <TitleBar />
          <Ribbon />
          <QuickAccess />
          <FormulaBar />
          <Sheet />
          <SheetTabs />
          <StatusBar />
        </div>
      </main>
      <div className="absolute right-[363px] bottom-[58px] flex h-[26px] w-[62px] items-center justify-center gap-1 rounded-md bg-white text-[13px] text-[#333] shadow-[0_0_4px_#000000aa]">
        <span className="font-['Liberation_Sans',sans-serif]">EN</span>
        <svg width="11" height="12" viewBox="0 0 11 12" fill="none" stroke="#333" strokeWidth="1.200">
          <path d="M5 1q5 1 5 5T5 11H1q5-2 5-5T5 1z" />
        </svg>
        <span>简</span>
      </div>
      <Watermark />
    </div>
  );
}
